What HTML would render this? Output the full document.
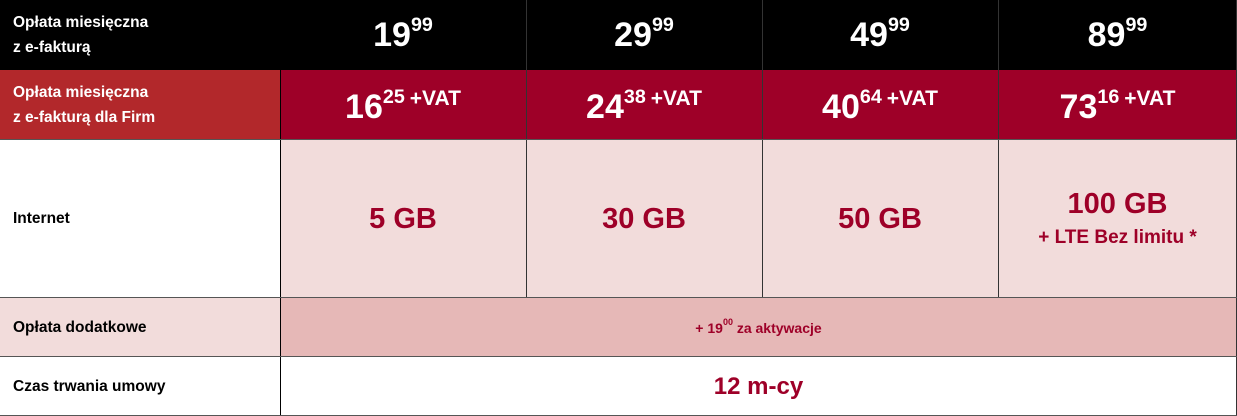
<!DOCTYPE html>
<html><head><meta charset="utf-8"><style>
*{margin:0;padding:0;box-sizing:border-box}
body{width:1237px;height:416px;background:#fff;font-family:"Liberation Sans",sans-serif;font-weight:bold;position:relative;overflow:hidden}
.c{position:absolute;display:flex;align-items:center;justify-content:center;text-align:center}
.l{justify-content:flex-start;text-align:left;padding-left:13px}
.vl{position:absolute;width:1px;background:#333}
.hl{position:absolute;height:1px;background:#555;left:0;width:1237px}
sup{font-size:0.58em;position:relative;top:-0.5em;vertical-align:baseline;line-height:0}
.p{font-size:34px;color:#fff}
.v{font-size:21px;position:relative;top:-8px;margin-left:5px}
.g{font-size:29px;color:#9e0028}
</style></head><body>
<div class="c l" style="left:0;top:0;width:280px;height:70px;background:#000;color:#fff;font-size:15.5px;line-height:25px">Opłata miesięczna<br>z e-fakturą</div>
<div class="c" style="left:280px;top:0;width:957px;height:70px;background:#000"></div>
<div class="c p" style="left:280px;top:4px;width:246px;height:62px">19<sup>99</sup></div>
<div class="c p" style="left:526px;top:4px;width:236px;height:62px">29<sup>99</sup></div>
<div class="c p" style="left:762px;top:4px;width:236px;height:62px">49<sup>99</sup></div>
<div class="c p" style="left:998px;top:4px;width:239px;height:62px">89<sup>99</sup></div>

<div class="c l" style="left:0;top:70px;width:280px;height:70px;background:#b2282b;color:#fff;font-size:15.5px;line-height:25px">Opłata miesięczna<br>z e-fakturą dla Firm</div>
<div class="c" style="left:280px;top:70px;width:957px;height:70px;background:#9e0028"></div>
<div class="c p" style="left:280px;top:72px;width:246px;height:70px">16<sup>25</sup><span class="v">+VAT</span></div>
<div class="c p" style="left:526px;top:72px;width:236px;height:70px">24<sup>38</sup><span class="v">+VAT</span></div>
<div class="c p" style="left:762px;top:72px;width:236px;height:70px">40<sup>64</sup><span class="v">+VAT</span></div>
<div class="c p" style="left:998px;top:72px;width:239px;height:70px">73<sup>16</sup><span class="v">+VAT</span></div>

<div class="c l" style="left:0;top:140px;width:280px;height:158px;font-size:15.5px;color:#000">Internet</div>
<div style="position:absolute;left:280px;top:140px;width:957px;height:158px;background:#f2dcdb"></div>
<div class="c g" style="left:280px;top:140px;width:246px;height:158px">5 GB</div>
<div class="c g" style="left:526px;top:140px;width:236px;height:158px">30 GB</div>
<div class="c g" style="left:762px;top:140px;width:236px;height:158px">50 GB</div>
<div class="c g" style="left:998px;top:140px;width:239px;height:158px;flex-direction:column;line-height:38px">100 GB<span style="font-size:19px;line-height:30px">+ LTE Bez limitu *</span></div>

<div class="c l" style="left:0;top:298px;width:280px;height:59px;background:#f2dcdb;font-size:15.5px">Opłata dodatkowe</div>
<div class="c" style="left:280px;top:298px;width:957px;height:59px;background:#e6b8b7;color:#9e0028;font-size:14px">+ 19<sup style="font-size:9px;top:-0.6em">00</sup>&nbsp;za aktywacje</div>

<div class="c l" style="left:0;top:357px;width:280px;height:59px;font-size:15.5px">Czas trwania umowy</div>
<div class="c" style="left:280px;top:357px;width:957px;height:59px;color:#9e0028;font-size:24px">12 m-cy</div>

<div class="vl" style="left:280px;top:0;height:416px;background:#000"></div>
<div class="vl" style="left:526px;top:0;height:298px"></div>
<div class="vl" style="left:762px;top:0;height:298px"></div>
<div class="vl" style="left:998px;top:0;height:298px"></div>
<div class="vl" style="left:1236px;top:0;height:416px"></div>
<div class="hl" style="top:139px"></div>
<div class="hl" style="top:297px"></div>
<div class="hl" style="top:356px"></div>
<div class="hl" style="top:415px"></div>
</body></html>
